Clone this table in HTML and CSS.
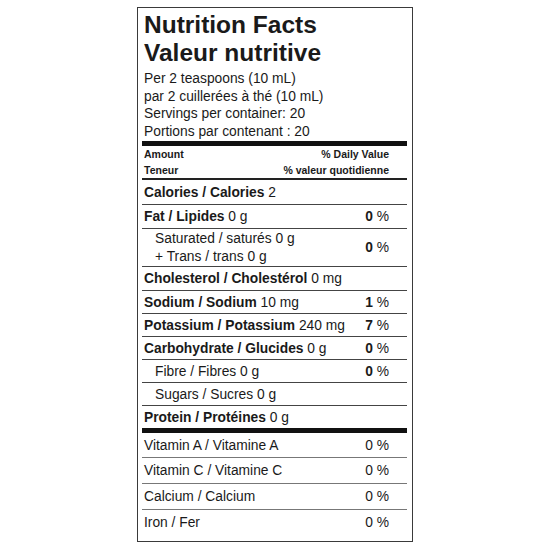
FILE: index.html
```html
<!DOCTYPE html>
<html lang="en">
<head>
    <meta charset="UTF-8">
    <meta name="viewport" content="width=device-width, initial-scale=1.0">
    <title>Nutrition Facts</title>
    <link rel="stylesheet" href="styles.css">
</head>
<body>
    <div class="label">
        <h1 class="title">Nutrition Facts<br>Valeur nutritive</h1>
        <div class="serving">
            <p>Per 2 teaspoons (10 mL)</p>
            <p>par 2 cuillerées à thé (10 mL)</p>
            <p>Servings per container: 20</p>
            <p>Portions par contenant : 20</p>
        </div>

        <div class="head">
            <div class="head_row"><span>Amount</span><span>% Daily Value</span></div>
            <div class="head_row"><span>Teneur</span><span>% valeur quotidienne</span></div>
        </div>

        <div class="row first"><span><b>Calories / Calories</b> 2</span></div>
        <div class="row tall"><span><b>Fat / Lipides</b> 0 g</span><span class="pct"><b>0</b> %</span></div>
        <div class="row double sub">
            <div>
                <p>Saturated / saturés 0 g</p>
                <p>+ Trans / trans 0 g</p>
            </div>
            <span class="pct"><b>0</b> %</span>
        </div>
        <div class="row tall"><span><b>Cholesterol / Cholestérol</b> 0 mg</span></div>
        <div class="row"><span><b>Sodium / Sodium</b> 10 mg</span><span class="pct"><b>1</b> %</span></div>
        <div class="row"><span><b>Potassium / Potassium</b> 240 mg</span><span class="pct"><b>7</b> %</span></div>
        <div class="row"><span><b>Carbohydrate / Glucides</b> 0 g</span><span class="pct"><b>0</b> %</span></div>
        <div class="row sub"><span>Fibre / Fibres 0 g</span><span class="pct"><b>0</b> %</span></div>
        <div class="row sub"><span>Sugars / Sucres 0 g</span></div>
        <div class="row"><span><b>Protein / Protéines</b> 0 g</span></div>

        <div class="vitamins">
            <div class="vit_row"><span>Vitamin A / Vitamine A</span><span class="pct">0 %</span></div>
            <div class="vit_row"><span>Vitamin C / Vitamine C</span><span class="pct">0 %</span></div>
            <div class="vit_row"><span>Calcium / Calcium</span><span class="pct">0 %</span></div>
            <div class="vit_row"><span>Iron / Fer</span><span class="pct">0 %</span></div>
        </div>
    </div>
</body>
</html>
```

FILE: styles.css
```css
body{
    margin: 0;
    padding-top: 7px;
    display: flex;
    justify-content: center;
    background-color: white;
    font-family: "Liberation Sans", Arial, sans-serif;
    color: #1a1a1a;
}
p{
    margin: 0;
}
b{
    font-weight: bold;
}
.label{
    width: 276px;
    box-sizing: border-box;
    border: 1px solid #3a3a3a;
    padding: 0 5px 6px 4px;
}
.title{
    margin: 0;
    padding: 3px 0 0 2px;
    font-size: 24.5px;
    line-height: 28px;
    font-weight: bold;
}
/* serving size */
.serving{
    margin: 3px 0 1px 0;
    padding-left: 2px;
    font-size: 13.8px;
    line-height: 17.5px;
}
.head{
    border-top: 5px solid #111;
    border-bottom: 2px solid #222;
    height: 32px;
}
.head_row{
    display: flex;
    justify-content: space-between;
    padding: 0 18px 0 2px;
    height: 16px;
    line-height: 16px;
    font-size: 10.5px;
    font-weight: bold;
}
/* rows: height includes the top line */
.row{
    display: flex;
    justify-content: space-between;
    align-items: center;
    box-sizing: border-box;
    height: 23px;
    border-top: 1px solid #444;
    padding: 0 18px 0 2px;
    font-size: 13.8px;
}
.row.first{
    border-top: none;
    height: 24px;
}
.row.tall{
    height: 24px;
}
.row.double{
    height: 38px;
}
.row.double p{
    line-height: 18px;
}
.row.sub{
    padding-left: 13px;
}
.vitamins{
    border-top: 5px solid #111;
}
.vit_row{
    display: flex;
    justify-content: space-between;
    align-items: center;
    box-sizing: border-box;
    height: 26px;
    border-top: 1px solid #777;
    padding: 0 18px 0 2px;
    font-size: 13.8px;
}
.vit_row:first-child{
    border-top: none;
    height: 24px;
}
.pct{
    white-space: nowrap;
}
```
